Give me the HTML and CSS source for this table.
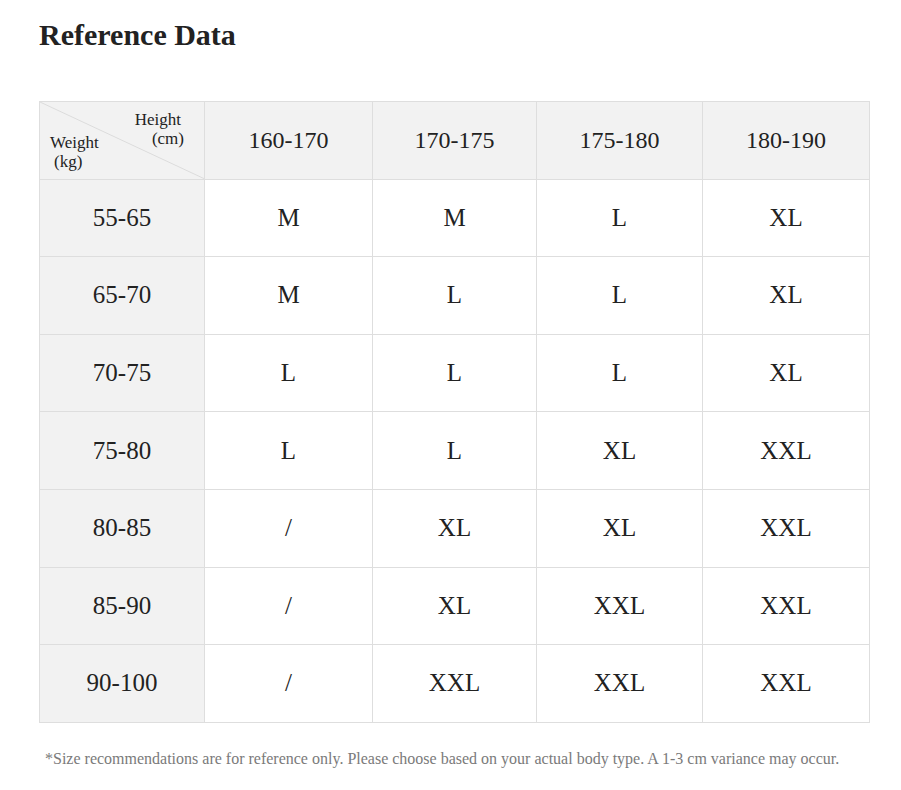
FILE: index.html
```html
<!DOCTYPE html>
<html lang="en">
<head>
<meta charset="utf-8">
<title>Reference Data</title>
<link rel="stylesheet" href="styles.css">
</head>
<body>
<main class="page">
  <h1 class="title">Reference Data</h1>
  <table class="size-table">
    <colgroup>
      <col class="c1"><col class="c2"><col class="c3"><col class="c4"><col class="c5">
    </colgroup>
    <thead>
      <tr>
        <th class="corner">
          <svg class="diag" viewBox="0 0 100 100" preserveAspectRatio="none"><line x1="0" y1="0" x2="100" y2="100" vector-effect="non-scaling-stroke"/></svg>
          <span class="corner-h">Height</span>
          <span class="corner-cm">(cm)</span>
          <span class="corner-w">Weight</span>
          <span class="corner-kg">(kg)</span>
        </th>
        <th>160-170</th>
        <th>170-175</th>
        <th>175-180</th>
        <th>180-190</th>
      </tr>
    </thead>
    <tbody>
      <tr><th>55-65</th><td>M</td><td>M</td><td>L</td><td>XL</td></tr>
      <tr><th>65-70</th><td>M</td><td>L</td><td>L</td><td>XL</td></tr>
      <tr><th>70-75</th><td>L</td><td>L</td><td>L</td><td>XL</td></tr>
      <tr><th>75-80</th><td>L</td><td>L</td><td>XL</td><td>XXL</td></tr>
      <tr><th>80-85</th><td>/</td><td>XL</td><td>XL</td><td>XXL</td></tr>
      <tr><th>85-90</th><td>/</td><td>XL</td><td>XXL</td><td>XXL</td></tr>
      <tr><th>90-100</th><td>/</td><td>XXL</td><td>XXL</td><td>XXL</td></tr>
    </tbody>
  </table>
  <p class="note">*Size recommendations are for reference only. Please choose based on your actual body type. A 1-3 cm variance may occur.</p>
</main>
</body>
</html>
```

FILE: styles.css
```css
html, body {
  margin: 0;
  padding: 0;
  background: #ffffff;
}
body {
  font-family: "Liberation Serif", "Times New Roman", serif;
  color: #222;
}
.page {
  padding: 17px 20px 0 39px;
}
.title {
  margin: 0;
  font-size: 30px;
  font-weight: bold;
  line-height: 36px;
  color: #222;
}
.size-table {
  margin-top: 48px;
  width: 830px;
  border-collapse: collapse;
  table-layout: fixed;
}
.c1 { width: 165px; }
.c2 { width: 168px; }
.c3 { width: 164px; }
.c4 { width: 166px; }
.c5 { width: 167px; }
.size-table th,
.size-table td {
  border: 1px solid #dedede;
  height: 76.6px;
  padding: 0;
  text-align: center;
  vertical-align: middle;
  font-size: 25px;
  font-weight: normal;
  color: #222;
}
.size-table thead th {
  font-size: 24px;
}
.size-table thead th,
.size-table tbody th {
  background: #f2f2f2;
}
.size-table td {
  background: #fff;
}
.size-table thead th.corner {
  position: relative;
  font-size: 17px;
}
.diag {
  position: absolute;
  left: 0;
  top: 0;
  width: 100%;
  height: 100%;
}
.diag line {
  stroke: #dcdcdc;
  stroke-width: 1;
}
.corner span {
  position: absolute;
  line-height: 20px;
  white-space: nowrap;
}
.corner-h { right: 23px; top: 8px; }
.corner-cm { right: 20px; top: 27px; }
.corner-w { left: 10px; top: 31px; }
.corner-kg { left: 14px; top: 50px; }
.note {
  margin: 27px 0 0 6px;
  font-size: 16px;
  color: #7a7a7a;
  white-space: nowrap;
}
```
